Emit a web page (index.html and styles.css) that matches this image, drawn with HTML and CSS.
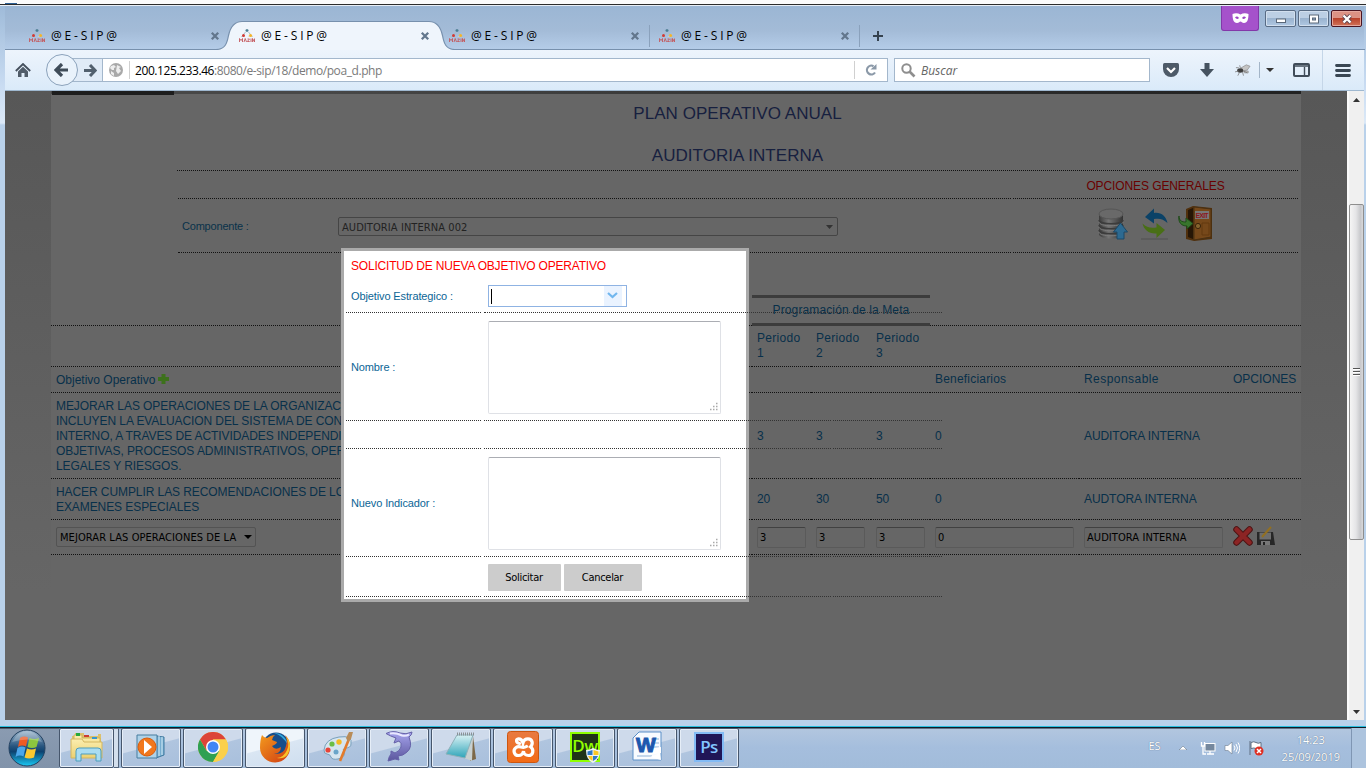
FILE: index.html
```html
<!DOCTYPE html>
<html lang="es">
<head>
<meta charset="utf-8">
<title>@ E - S I P @</title>
<link rel="stylesheet" href="styles.css">
</head>
<body>
<svg width="0" height="0" class="defs" aria-hidden="true">
  <defs>
    <linearGradient id="gold" x1="0" y1="0" x2="0" y2="1"><stop offset="0" stop-color="#fbeeb0"/><stop offset="1" stop-color="#ecd070"/></linearGradient>
    <linearGradient id="orb" x1="0" y1="0" x2="0" y2="1"><stop offset="0" stop-color="#9fb9cf"/><stop offset=".45" stop-color="#28557f"/><stop offset=".6" stop-color="#0d4270"/><stop offset="1" stop-color="#19c9f5"/></linearGradient>
    <linearGradient id="dolphinFill" x1="0" y1="0" x2="0" y2="1"><stop offset="0" stop-color="#a7a5ee"/><stop offset="1" stop-color="#5b569d"/></linearGradient>
    <linearGradient id="paper" x1="0" y1="0" x2="0" y2="1"><stop offset="0" stop-color="#d8f1f4"/><stop offset="1" stop-color="#2ea4b8"/></linearGradient>
    <linearGradient id="orange" x1="0" y1="0" x2="0" y2="1"><stop offset="0" stop-color="#e87a42"/><stop offset="1" stop-color="#f36b16"/></linearGradient>
    <linearGradient id="fox" x1="0" y1="0" x2="1" y2="1"><stop offset="0" stop-color="#f39a1e"/><stop offset="1" stop-color="#cf3a12"/></linearGradient>
    <linearGradient id="disk" x1="0" y1="0" x2="1" y2="0"><stop offset="0" stop-color="#3c3c3c"/><stop offset=".4" stop-color="#747474"/><stop offset="1" stop-color="#333"/></linearGradient>
    <symbol id="mazin" viewBox="0 0 16 13">
      <path d="M8 0v3M6.500 1.500h3" stroke="#4d7f92" stroke-width="1.300"/>
      <path d="M6.500 3 2.500 8M9.500 3l4 5" stroke="#a8c0c6"/>
      <circle cx="4.500" cy="6.500" r="1.500" fill="#d33b35"/><circle cx="11.500" cy="6.500" r="1.600" fill="#f4b52a"/>
      <path d="M6 8h3l2-2-1 2H5z" fill="#f3d8b0"/>
      <path d="M.5 13v-3.500l1.500 2 1.500-2V13M5 13l1.200-3.500L7.500 13M8.500 10h2L8.300 12.500h2.400M12 9.500V13M13.500 13V9.500l2 3.500V9.500" stroke="#c4595d" stroke-width=".9" fill="none"/>
    </symbol>
    <symbol id="x" viewBox="0 0 10 10"><path d="m1.800 1.800 6.400 6.400m0-6.400L1.800 8.200" stroke="#63778d" stroke-width="2.300"/></symbol>
  </defs>
</svg>
<div class="screen">
  <div class="backdrop"><i></i></div>
  <div class="window">
    <div class="strip">
      <svg class="outline" width="1360" height="44" viewBox="5 6 1360 44">
        <path d="M5 50V49.500H216c9 0 11-6 12.500-14 2-9 6-14 13.500-14H429c7.500 0 11.500 5 13.500 14 1.500 8 3.500 14 12.500 14H1365V51H5z" fill="#eff5fc"/>
        <path d="M5 49.500H216c9 0 11-6 12.500-14 2-9 6-14 13.500-14H429c7.500 0 11.500 5 13.500 14 1.500 8 3.500 14 12.500 14H1365" fill="none" stroke="#7790ad" stroke-width="1.200"/>
      </svg>
      <div class="tab"><svg width="16" height="13"><use href="#mazin"/></svg><span>@ E - S I P @</span><svg width="10" height="10"><use href="#x"/></svg></div>
      <div class="tab"><svg width="16" height="13"><use href="#mazin"/></svg><span>@ E - S I P @</span><svg width="10" height="10"><use href="#x"/></svg></div>
      <div class="tab ruled"><svg width="16" height="13"><use href="#mazin"/></svg><span>@ E - S I P @</span><svg width="10" height="10"><use href="#x"/></svg></div>
      <div class="tab ruled"><svg width="16" height="13"><use href="#mazin"/></svg><span>@ E - S I P @</span><svg width="10" height="10"><use href="#x"/></svg></div>
      <svg class="plus" width="12" height="12"><path d="M6 1v10M1 6h10" stroke="#35424f" stroke-width="2"/></svg>
      <div class="captions">
        <div class="mask"><svg width="17" height="11" viewBox="0 0 17 11"><path d="M.5 1C3 0 6 0 8.500 1.500 11 0 14 0 16.500 1c0 5-1 9-4.500 9-2 0-2.500-1.500-3.500-1.500S7 10 5 10C1.500 10 .5 6 .5 1z" fill="#fff"/><path d="M3 4.500q2-2 4 .5-2 2-4-.5m7 .5q2-2.500 4-.5-2 2.500-4 .5" fill="#9a45c4"/></svg></div>
        <div class="cap"><svg width="12" height="8"><rect x="1.500" y="4" width="9" height="3.500" fill="#fff" stroke="#5a6879"/></svg></div>
        <div class="cap"><svg width="12" height="10"><rect x="1.500" y="1" width="9" height="8" fill="#fff" stroke="#5a6879"/><rect x="4.500" y="4" width="3" height="2" fill="#8fa5c0" stroke="#5a6879"/></svg></div>
        <div class="cap red"><svg width="12" height="10"><path d="m2.500 1.500 7 7m0-7-7 7" stroke="#5b4651" stroke-width="4"/><path d="m2.500 1.500 7 7m0-7-7 7" stroke="#fff" stroke-width="2.400"/></svg></div>
      </div>
    </div>
    <div class="toolbar">
      <svg class="home" width="16" height="15" viewBox="0 0 16 15"><path d="m.8 8 7.200-7 7.200 7" fill="none" stroke="#444f5c" stroke-width="1.800"/><path d="M3 8.500 8 3.800l5 4.700V14H9.500v-4h-3v4H3z" fill="#505c69"/></svg>
      <div class="back"><svg width="16" height="14" viewBox="0 0 16 14"><path d="M8 1 2 7l6 6M3 7h11" fill="none" stroke="#3f4c59" stroke-width="3.200"/></svg></div>
      <div class="fwd"><svg width="13" height="13" viewBox="0 0 13 13"><path d="m6 1 5.200 5.500L6 12M0 6.500h10" fill="none" stroke="#52606e" stroke-width="3"/></svg></div>
      <div class="address">
        <svg width="14" height="14" viewBox="0 0 14 14"><circle cx="7" cy="7" r="7" fill="#a9a9a9"/><path d="m2 3 3-1 2 2-2 1 0 2-2 0-2-2M8 2l4 2-2 1 2 3-3 3-2-3zM2 8l3 2 0 3-3-2z" fill="#fff" opacity=".8"/></svg>
        <i class="bar"></i><span class="url"><b>200.125.233.46</b>:8080/e-sip/18/demo/poa_d.php</span><i class="bar"></i>
        <svg class="reload" width="12" height="12" viewBox="0 0 12 12"><path d="M8.500 2.200A4.400 4.400 0 1 0 10 8.500" fill="none" stroke="#8b99a8" stroke-width="2.200"/><path d="M5.500 5.500h6V0z" fill="#8b99a8"/></svg>
      </div>
      <div class="search"><svg width="15" height="15" viewBox="0 0 15 15"><circle cx="5.500" cy="5.500" r="4.200" fill="none" stroke="#8e8e8e" stroke-width="2"/><path d="m8.500 8.500 5 5" stroke="#8e8e8e" stroke-width="2.600"/></svg><span>Buscar</span></div>
      <div class="tools">
        <svg width="16" height="14" viewBox="0 0 16 14"><path d="M1.500 0h13Q16 0 16 1.500V6a8 8 0 0 1-16 0V1.500Q0 0 1.500 0z" fill="#4d5a68"/><path d="m4 5 4 4 4-4" fill="none" stroke="#fff" stroke-width="2.200"/></svg>
        <svg width="14" height="14" viewBox="0 0 14 14"><path d="M4.500 0h5v6H14l-7 8-7-8h4.500z" fill="#465360"/></svg>
        <svg class="fly" width="16" height="13" viewBox="0 0 17 13"><path d="m6 4 6-3.500L16 2l-3 4-5 1zM9 7l5 0 0 2-4 0z" fill="#c4c4c4" stroke="#888" stroke-width=".7"/><ellipse cx="5.500" cy="6.500" rx="3.200" ry="2.400" fill="#3d3d3d"/><path d="M1 3.500h3M0 8l4-1M3 12l2-4M9 12 8 8M13 9l-4-2M5 1l1 4" stroke="#777" stroke-width=".8"/></svg>
        <i class="rule"></i>
        <svg class="drop" width="8" height="4"><path d="M0 0h8L4 4z" fill="#333"/></svg>
        <svg class="panel" width="17" height="14" viewBox="0 0 17 14"><rect x="1" y="1" width="15" height="12" rx="1" fill="none" stroke="#404c59" stroke-width="2"/><path d="M1 3h15M11.500 4v9" stroke="#404c59" stroke-width="1.400"/></svg>
        <i class="rule tall"></i>
        <svg width="16" height="13"><path d="M1.500 1.500h13m-13 5h13m-13 5h13" stroke="#394653" stroke-width="2.800" stroke-linecap="round"/></svg>
      </div>
    </div>
    <div class="view">
      <div class="page">
        <main class="sheet">
          <div class="ribbon"><i></i></div>
          <section class="head">
            <h1>PLAN OPERATIVO ANUAL</h1>
            <h1 class="second">AUDITORIA INTERNA</h1>
            <div class="hrow general"><div></div><div class="redtext">OPCIONES GENERALES</div></div>
            <div class="hrow comp">
              <div class="lab">Componente :</div>
              <div><div class="select wide"><span>AUDITORIA INTERNA 002</span><svg width="7" height="4"><path d="M0 0h7L3.500 4z" fill="#333"/></svg></div></div>
              <div class="icons">
                <svg width="30" height="32" viewBox="0 0 30 32"><path d="M1 6v20c0 6 24 6 24 0V6z" fill="url(#disk)"/><ellipse cx="13" cy="6" rx="12" ry="5" fill="#696969" stroke="#555"/><path d="M1 12c0 5 24 5 24 0M1 17c0 5 24 5 24 0M1 22c0 5 24 5 24 0" fill="none" stroke="#3c3c3c" stroke-width="1.500"/><path d="M1 14c0 5 24 5 24 0M1 19c0 5 24 5 24 0M1 24c0 5 24 5 24 0" fill="none" stroke="#7c7c7c"/><path d="m22.500 15 7 9H26v7h-7v-7h-3.500z" fill="#2d6a91" stroke="#1c4866"/></svg>
                <svg class="sync" width="28" height="32" viewBox="0 0 28 32"><path d="M4 9 13 .5V5c7-1 12 3 13.500 10-4-4-8-5-13.500-4v4.500z" fill="#0b4267"/><path d="M24 22l-8.500 8v-4.500C8 26 3 22 1.500 15.500c4 4 8 5 14 4V15z" fill="#496f16"/><path d="M0 31h27" stroke="#515151"/></svg>
                <svg class="exit" width="35" height="35" viewBox="0 0 35 35"><path d="M8 3 15 0l19 2v31l-18 2-8-2z" fill="#51300d"/><path d="m10 4 5-2v31l-5-2z" fill="#261606"/><path d="m16 1 17 2v28l-17 3z" fill="#76481a" stroke="#493013"/><path d="M17 5h14v8H17z" fill="#777"/><path d="M24 17h7v12h-7z" fill="none" stroke="#62390f"/><circle cx="20" cy="20" r="2.600" fill="#85642f" stroke="#3b240b"/><path d="M1 10c0 5 3 6 7 6v-4l7 5.500L9 23v-3C3 20 0 16 1 10z" fill="#38752c" stroke="#1f4b19"/><text x="17.500" y="12" font-size="7" font-weight="bold" fill="#8c1920" textLength="13" font-family="Liberation Sans">EXIT</text></svg>
              </div>
            </div>
          </section>
          <section class="plan">
            <div class="row r1"><div class="c"></div><div class="meta">Programación de la Meta</div><div class="c tail"></div></div>
            <div class="row r2"><div class="c"></div><div class="c">Periodo<br>1</div><div class="c">Periodo<br>2</div><div class="c">Periodo<br>3</div><div class="c"></div><div class="c"></div><div class="c"></div></div>
            <div class="row r3"><div class="c first-head"><span>Objetivo Operativo</span><svg class="add" width="13" height="12"><path d="M6.500 1v10M1 6h11" stroke="#3d711c" stroke-width="4"/></svg></div><div class="c"></div><div class="c"></div><div class="c"></div><div class="c low">Beneficiarios</div><div class="c low resp">Responsable</div><div class="c low">OPCIONES</div></div>
            <div class="row r4"><div class="c">MEJORAR LAS OPERACIONES DE LA ORGANIZACION,<br>INCLUYEN LA EVALUACION DEL SISTEMA DE CONTROL<br>INTERNO, A TRAVES DE ACTIVIDADES INDEPENDIENTES,<br>OBJETIVAS, PROCESOS ADMINISTRATIVOS, OPERATIVOS,<br>LEGALES Y RIESGOS.</div><div class="c">3</div><div class="c">3</div><div class="c">3</div><div class="c">0</div><div class="c">AUDITORA INTERNA</div><div class="c"></div></div>
            <div class="row r5"><div class="c">HACER CUMPLIR LAS RECOMENDACIONES DE LOS<br>EXAMENES ESPECIALES</div><div class="c">20</div><div class="c">30</div><div class="c">50</div><div class="c">0</div><div class="c">AUDTORA INTERNA</div><div class="c"></div></div>
            <div class="row r6"><div class="c"><div class="select"><span>MEJORAR LAS OPERACIONES DE LA</span><svg width="8" height="4"><path d="M0 0h8L4 4z" fill="#000"/></svg></div></div><div class="c"><div class="input">3</div></div><div class="c"><div class="input">3</div></div><div class="c"><div class="input">3</div></div><div class="c"><div class="input long">0</div></div><div class="c"><div class="input long">AUDITORA INTERNA</div></div>
              <div class="c acts"><svg width="20" height="20"><path d="m3.500 3.500 13 13m0-13-13 13" stroke="#4e1414" stroke-width="6.500" stroke-linecap="round"/><path d="m3.500 3.500 13 13m0-13-13 13" stroke="#8c2424" stroke-width="4.500" stroke-linecap="round"/></svg><svg width="19" height="20" viewBox="0 0 19 20"><path d="M1 6h16l2 13H1z" fill="#272727"/><path d="M3.500 6.500h11.500v7H3.500z" fill="#6e6e6e"/><path d="M5 15h9v4H5z" fill="#777"/><path d="M7 16h2v3H7z" fill="#222"/><path d="M6 11 15 1" stroke="#927022" stroke-width="2"/></svg></div></div>
          </section>
        </main>
        <div class="modal">
          <h2>SOLICITUD DE NUEVA OBJETIVO OPERATIVO</h2>
          <div class="form">
            <label>Objetivo Estrategico :</label><div class="field span m1"><div class="combo"><i class="caret"></i><span class="trigger"><svg width="11" height="7"><path d="m1 1 4.500 4L10 1" fill="none" stroke="#72b7ee" stroke-width="2.200"/></svg></span></div></div>
            <label>Nombre :</label><div class="field m2"><div class="area"><svg width="9" height="9"><path d="M7 1.500h1.500M7 4.500h1.500M7 7.500h1.500M4 4.500h1.500M4 7.500h1.500M1 7.500h1.500" stroke="#aaa" stroke-width="1.400"/></svg></div></div><div class="rest"></div>
            <label></label><div class="field m3"></div><div class="rest"></div>
            <label>Nuevo Indicador :</label><div class="field m2"><div class="area"><svg width="9" height="9"><path d="M7 1.500h1.500M7 4.500h1.500M7 7.500h1.500M4 4.500h1.500M4 7.500h1.500M1 7.500h1.500" stroke="#aaa" stroke-width="1.400"/></svg></div></div><div class="rest"></div>
            <label></label><div class="field m5"><button class="ok">Solicitar</button><button class="cancel">Cancelar</button></div><div class="rest"></div>
          </div>
        </div>
      </div>
      <div class="scroll">
        <svg width="7" height="4"><path d="M3.500 0 7 4H0z" fill="#333"/></svg>
        <div class="thumb"><i></i><i></i><i></i></div>
        <svg width="7" height="4"><path d="M0 0h7L3.500 4z" fill="#333"/></svg>
      </div>
    </div>
  </div>
  <div class="taskbar">
    <div class="start"><svg width="38" height="38" viewBox="0 0 38 38"><circle cx="19" cy="19" r="18" fill="url(#orb)" stroke="#23405f"/><path d="M12 9q4-2.500 8-.5l-2 9q-4-2-8 .5z" fill="#ee5a24"/><path d="M21.500 9q5 2 9.500 0l-2.500 9q-4.500 2-9 0z" fill="#8cc63f"/><path d="M9.500 19q4-2.500 8-.5l-2 9q-4-2-8 .5z" fill="#4ba6ea"/><path d="M19 19.500q4.500 2 9 0l-2 9q-5 2-9.500 0z" fill="#fdc82f"/><path d="M4 13Q10 2 19 2t15 11q-14-5-30 0z" fill="#fff" opacity=".22"/></svg></div>
    <div class="app first"><svg width="34" height="32" viewBox="0 0 34 32"><path d="M2 5h3V2h9v3h14V3h3v23H2z" fill="#dcc16d"/><path d="M4 4h8v3h18v19H4z" fill="url(#gold)" stroke="#cfb258"/><path d="M6 2h4v3H6z" fill="#26a83c"/><path d="M14 4h5v2h-5z" fill="#cc3c33"/><path d="M22 6h5v2h-5z" fill="#3497d2"/><path d="M1 8h11l2 3h18v16H1z" fill="url(#gold)" stroke="#d3b661"/><path d="M6 30V20q0-3 3-3h19q3 0 3 3v10h-5v-7H11v7z" fill="#a9dcf1" stroke="#4f9dbb"/></svg></div>
    <i class="stack"></i>
    <div class="app"><svg width="30" height="28" viewBox="0 0 30 28"><path d="m20 3 8 1v18l-8 3z" fill="#76add0" stroke="#3f799f"/><path d="M23 3v20M26 4v18" stroke="#d5edf9"/><path d="M1 2h20v23H1z" fill="#aed2e9" stroke="#477c9f"/><circle cx="11" cy="14" r="9" fill="#f1771d" stroke="#db5b0b"/><path d="m8 7 8 7-8 7z" fill="#fff"/></svg></div>
    <div class="app"><svg width="30" height="30" viewBox="-15 -15 30 30"><circle r="15" fill="#fcd04b"/><path d="M0-7.500H13A15 15 0 0 0-13-7.500L-6.500 3.750z" fill="#dc4439"/><path d="M-13-7.500A15 15 0 0 0 0 15L6.500 3.750-6.500 3.750z" fill="#2fa053"/><path d="m0 15 6.500-11.250L0-7.500H13A15 15 0 0 1 0 15z" fill="#fbd04b"/><circle r="7" fill="#fff"/><circle r="5.500" fill="#4286f5"/></svg></div>
    <div class="app active"><svg width="32" height="32" viewBox="0 0 32 32"><circle cx="17" cy="15" r="13.500" fill="#174e8b"/><path d="M15 2q11 0 14 12-6-10-14-12" fill="#34a9dc"/><path d="M3 4q2 3 5 3 4-3 8-3-3 2-3 5l5 2q0 2-5 4 3 5 9 1 0 6-7 7 10 1 12-8 2-6-1-11 5 4 5 12a15 15 0 0 1-30 1Q1 9 3 4z" fill="url(#fox)"/><path d="M27 6q4 7 1 13-3 7-10 8 12 2 13-12 0-6-4-9z" fill="#f8c32b"/></svg></div>
    <div class="app"><svg width="32" height="32" viewBox="0 0 32 32"><path d="M3 19Q4 8 18 6t12 7q0 4-6 4-3 1-1 4 2 5-6 7-6 1-7-2t-4-3-3-4z" fill="#d6e5ef" stroke="#78a0bc"/><circle cx="7" cy="19" r="2.600" fill="#e74438"/><circle cx="11" cy="13" r="2.600" fill="#6bbe45"/><circle cx="18" cy="11" r="2.700" fill="#f6ba23"/><circle cx="15" cy="21" r="2.500" fill="#6aa5c9"/><path d="m28 8-9 22" stroke="#e27b2c" stroke-width="2.600"/><path d="m25 7 3-6 4 0-2 7-3 3z" fill="#b98c58"/></svg></div>
    <div class="app"><svg width="30" height="32" viewBox="0 0 30 32"><path d="M2 2.500Q9-1 16 2q6 2 12-1 0 3-3 5 4 10-2 15-4 4-9 4l1 4-4-1-7 2q1-5 3-7l0-3 4 2q5-2 6-6 1-4-2-6l-5 2q1-3 2-5Q6 5 2 2.500z" fill="url(#dolphinFill)" stroke="#6561a8"/><path d="M6 2.500q6-1 12 2 4 1 7-1" fill="none" stroke="#e9e8ff" stroke-width="2"/></svg></div>
    <div class="app"><svg width="32" height="32" viewBox="0 0 32 32"><path d="m28 5 3 23-6 2z" fill="#7c6848"/><path d="m28 4-1 26-8-3z" fill="#c8d0d0"/><path d="M12 4h16l-8 23L1 23z" fill="url(#paper)" stroke="#8db1b9"/><path d="M12 3h17" stroke="#899195" stroke-width="3" stroke-dasharray="1 1"/></svg></div>
    <div class="app"><svg width="32" height="32" viewBox="0 0 32 32"><rect x=".5" y=".5" width="31" height="31" rx="3" fill="url(#orange)" stroke="#cd5610"/><path d="M12.500 12.500C9 12 8.500 8 11.500 7.800c3 0 4 2.200 4.500 4 .5-2 2-4 5-4 4.500 0 5.500 5.200 2.500 8 4 3 2.500 8.700-2 8.700-3 0-5-2-5-4.500-.5 2.500-2 4.500-5 4.500-4.500 0-6-5.500-2.500-8q2-1.500 5-.5 3 1 5.500-.5" fill="none" stroke="#fff" stroke-width="3.200" stroke-linecap="round"/></svg></div>
    <div class="app"><div class="tile dw">Dw<svg width="14" height="15" viewBox="0 0 14 15"><path d="M7 0q3 2 7 2 0 10-7 13Q0 12 0 2q4 0 7-2z" fill="#eef3f8"/><path d="M6.500 2v5H1.500V3.500zM12 8q-1 3-5 5V8z" fill="#2e79c6"/><path d="M7.500 2v5h5V3.500zM2 8q1 3 4.500 5V8z" fill="#f9c824"/></svg></div></div>
    <div class="app"><svg width="30" height="32" viewBox="0 0 30 32"><path d="M7 1h22v28H1V7z" fill="#f8fbff" stroke="#5a8fc8"/><path d="M19 8h8m-8 4h8m-8 4h8M5 25h15" stroke="#8fb2d7"/><path d="m17 18 12-2v6l-12 2zM18 26l10-4 1 7z" fill="#fff"/><text x="4" y="21" font-family="Liberation Sans" font-weight="bold" font-size="21" fill="#1d58ae" stroke="#1d58ae">W</text></svg></div>
    <div class="app"><div class="tile ps">Ps</div></div>
    <div class="tray">
      <span class="lang">ES</span>
      <svg class="up" width="8" height="4"><path d="M4 0 8 4H0z" fill="#fff" stroke="#5b6b7d" stroke-width=".5"/></svg>
      <svg class="net" width="16" height="16" viewBox="0 0 16 16"><rect x="5" y="3.500" width="10" height="7.500" fill="#75889e" stroke="#fff"/><path d="M10 11v2.500M7 14h7M1.500 2v4h3V2M3 6v8h3" fill="none" stroke="#fff" stroke-width="1.300"/></svg>
      <svg class="vol" width="16" height="16" viewBox="0 0 16 16"><path d="M1 5.500h3L8 2v12L4 10.500H1z" fill="#fff" stroke="#6d7c8f" stroke-width=".6"/><path d="M10 5.500q2 2.500 0 5M12 4q3 4 0 8M14 2.500q3.500 5.500 0 11" fill="none" stroke="#fff"/></svg>
      <svg class="flag" width="16" height="16" viewBox="0 0 16 16"><path d="M2 1v14M3 2.500q3-1.500 5 0t5 0v6q-3 1-5 0t-5 0z" fill="#fff" stroke="#5f6f82"/><circle cx="11" cy="11" r="4.500" fill="#df3024"/><path d="m9 9 4 4m0-4-4 4" stroke="#fff" stroke-width="1.500"/></svg>
      <span class="clock">14:23<br>25/09/2019</span>
      <i class="desk"></i>
    </div>
  </div>
</div>
</body>
</html>
```
FILE: styles.css
```css
* { box-sizing: border-box; }
body { margin: 0; overflow: hidden; background: #fff; font-family: "Liberation Sans", Arial, sans-serif; }
svg { flex: none; display: block; }
.defs { position: absolute; }
.screen { width: 1366px; height: 768px; display: flex; flex-direction: column; }
.backdrop { height: 6px; border-bottom: 1px solid #e8eef5; background: linear-gradient(#fafafa 4px, #2b2b2b 4px); }
.backdrop i { display: block; width: 12px; height: 2px; margin-left: 5px; border-top: 1px solid #2d5f93; position: relative; top: 3px; }

/* browser window */
.window { height: 720px; padding: 0 2px 6px 5px; display: flex; flex-direction: column; background: linear-gradient(#9fbbd9, #c9dcf2 80px, #dce9f7 117px, #b9d1ea 119px, #b9d1ea); }
.strip { height: 44px; display: flex; position: relative; padding-left: 15px; background: linear-gradient(#9bb6d4, #a3bbd7 55%, #b5cde9); }
.outline { position: absolute; left: 0; top: 0; }
.tab { position: relative; width: 210px; height: 44px; padding: 16px 10px 1px 9px; display: flex; align-items: center; font: 12px "Open Sans", sans-serif; }
.tab span { flex: 1; margin-left: 6px; color: #000; letter-spacing: -.15px; }
.ruled::after { content: ""; position: absolute; right: 0; top: 19px; width: 1px; height: 22px; background: #8aa1bc; }
.plus { position: relative; margin: 24px 0 0 12px; }
.captions { position: relative; margin-left: auto; display: flex; padding-right: 2px; }
.mask { width: 38px; height: 25px; margin-right: 6px; background: #a552cb; border: 1px solid #8338a9; border-top: 0; border-radius: 0 0 3px 3px; display: flex; align-items: center; justify-content: center; padding-top: 1px; }
.cap { width: 31px; height: 17px; margin: 4px 2px 0 0; border: 1px solid #586b84; border-radius: 2px; box-shadow: inset 0 0 0 1px #d2dfee; background: linear-gradient(#bccfe4 50%, #9ab3cf 50%, #b0c8e2); display: flex; align-items: center; justify-content: center; }
.red { margin-right: 0; border-color: #4a1420; box-shadow: inset 0 0 0 1px #e5a99f; background: linear-gradient(#dc9284 48%, #b9422b 50%, #d1735a); }
.toolbar { height: 41px; display: flex; align-items: center; border-bottom: 1px solid #9fb8d0; background: linear-gradient(#edf4fc, #daeaf9); padding-left: 10px; }
.home { margin-right: 15px; }
.back { width: 32px; height: 32px; border: 1px solid #8ba2bb; border-radius: 50%; background: #e9f2fb; display: flex; align-items: center; justify-content: center; z-index: 1; }
.fwd { width: 30px; height: 24px; margin-left: -6px; border: 1px solid #a3b7cc; border-right: 0; background: #e0ebf7; display: flex; align-items: center; padding-left: 11px; }
.address { width: 786px; height: 24px; border: 1px solid #a3b7cc; background: #fff; display: flex; align-items: center; padding-left: 6px; margin-right: 6px; }
.bar { width: 1px; height: 18px; background: #d0d0d0; margin-left: 6px; }
.url { flex: 1; margin-left: 5px; font: 12px "Open Sans", sans-serif; color: #7a7a7a; white-space: nowrap; letter-spacing: -.42px; }
.url b { font-weight: 400; color: #000; }
.reload { margin: 0 10px; }
.search { width: 256px; height: 24px; border: 1px solid #a3b7cc; background: #fff; display: flex; align-items: center; padding-left: 6px; font: italic 12px "Open Sans", sans-serif; color: #666; }
.search span { margin-left: 5px; }
.tools { flex: 1; display: flex; align-items: center; padding-left: 13px; }
.tools svg + svg { margin-left: 21px; }
.rule { width: 1px; height: 16px; background: #a3b5c8; margin-left: 8px; }
.drop { margin-left: 6px; }
.tools .panel { margin-left: 19px; }
.tools .tall { height: 40px; background: #c5d6e8; margin: 0 12px 0 12px; }
.view { flex: 1; display: flex; }
.page { width: 1342px; position: relative; padding-left: 46px; overflow: hidden; background: linear-gradient(#575757, #666 500px); }
.sheet { width: 1250px; height: 500px; background: #666; }

/* page heading */
.ribbon { height: 3px; background: linear-gradient(90deg, #484848, #484848 20%, #222 95%); }
.ribbon i { display: block; width: 122px; height: 4px; margin-left: 1px; background: #1d1d1d; }
.head { margin-left: 126px; width: 1121px; }
h1 { margin: 0; height: 38px; line-height: 40px; text-align: center; font-size: 17px; font-weight: 400; color: #17203f; letter-spacing: .04px; }
.second { height: 39px; line-height: 48px; border-bottom: 1px dotted #111; }
.hrow { display: grid; gap: 2px; margin-left: 1px; font-size: 12px; }
.hrow > div { border-bottom: 1px dotted #111; display: flex; align-items: center; }
.general { grid-template-columns: 833px 285px; height: 28px; }
.comp { grid-template-columns: 154px 677px 285px; height: 54px; }
.hrow .redtext { justify-content: center; color: #6a0000; padding-top: 2px; letter-spacing: -.1px; }
.comp .lab { padding-left: 4px; font-size: 11px; color: #09324a; letter-spacing: -.2px; }
.select { width: 200px; height: 20px; border: 1px solid #535353; border-radius: 2px; display: flex; align-items: center; justify-content: space-between; padding: 0 3px; font: 11px "DejaVu Sans Condensed", sans-serif; letter-spacing: .08px; white-space: nowrap; color: #000; }
.wide { width: 500px; height: 19px; margin: 2px 0 0 4px; border-color: #454545; color: #222; padding: 1px 4px 0 3px; }
.hrow .icons { padding: 0 0 4px 85px; }
.sync { margin-left: 13px; }
.exit { margin-left: 9px; }

/* plan table */
.row { display: grid; grid-template-columns: 701px 59px 60px 59px 149px 149px 73px; font-size: 12px; line-height: 15px; color: #08304a; }
.c { border-bottom: 1px dotted #111; padding-left: 5px; display: flex; align-items: center; white-space: nowrap; letter-spacing: .15px; }
.r1 { grid-template-columns: 701px 178px 371px; height: 73px; }
.meta { height: 31px; margin-top: 42px; border-top: 3px solid #3c3c3c; border-bottom: 3px solid #3c3c3c; display: flex; align-items: center; justify-content: center; letter-spacing: .12px; }
.r2 { height: 41px; }
.r2 .c { letter-spacing: .3px; }
.r3 { height: 26px; }
.first-head { letter-spacing: 0; padding-top: 2px; }
.low { letter-spacing: .2px; }
.resp { letter-spacing: .45px; }
.r3 .c:last-child { letter-spacing: 0; }
.add { margin: -4px 0 0 2px; }
.r4 { height: 86px; }
.r4 .c, .r5 .c { letter-spacing: -.08px; padding-top: 2px; }
.r5 { height: 41px; }
.r5 .c { padding-top: 1px; }
.r6 { height: 35px; }
.input { width: 49px; height: 21px; border: 1px solid #5a5a5a; border-top-color: #414141; border-radius: 2px; padding-left: 2px; font: 11px/20px "DejaVu Sans Condensed", sans-serif; letter-spacing: .08px; color: #000; }
.long { width: 139px; }
.acts svg + svg { margin-left: 3px; }
.acts svg { margin-top: -2px; }

/* dialog */
.modal { position: absolute; left: 336px; top: 157px; width: 408px; height: 354px; border: 3px solid #aaa; background: #fff; }
.modal h2 { margin: 0; height: 28px; padding-left: 7px; font-size: 12px; line-height: 30px; font-weight: 400; color: #f00; white-space: nowrap; letter-spacing: -.2px; }
.form { width: 596px; margin-left: 2px; display: grid; grid-template-columns: 135px 347px 109px; grid-template-rows: 34px 108px 28px 108px 40px; column-gap: 2.500px; font-size: 11px; color: #0b6596; }
.form > * { border-bottom: 1px dotted #333; display: flex; align-items: center; }
.form label { padding-left: 5px; letter-spacing: -.12px; }
.span { grid-column: span 2; }
.field { padding-left: 4px; }
.m2, .m5 { padding-top: 2px; }
.combo { width: 139px; height: 22px; border: 1px solid #8fb3e3; display: flex; justify-content: space-between; padding-right: 4px; }
.caret { width: 1px; height: 15px; margin: 3px 0 0 2px; background: #000; }
.trigger { width: 18px; background: #eaf3ff; display: flex; align-items: center; justify-content: center; }
.area { width: 233px; height: 93px; border: 1px solid #dfe1e6; border-top-color: #abadb3; border-radius: 2px; display: flex; align-items: flex-end; justify-content: flex-end; padding: 2px; }
.m5 { gap: 3px; }
.m5 button { height: 27px; border: 0; padding: 0; background: #ccc; border-radius: 1px; font: 11px "DejaVu Sans Condensed", sans-serif; letter-spacing: -.3px; color: #000; }
.ok { width: 73px; }
.cancel { width: 78px; }

/* scrollbar */
.scroll { width: 17px; border-left: 2px solid #fafafa; background: #f0f0f0; display: flex; flex-direction: column; align-items: center; padding: 7px 0 6px; }
.thumb { width: 15px; height: 336px; margin: 102px 0 auto; border: 1px solid #8e8e8e; border-radius: 2px; background: linear-gradient(90deg, #f5f5f5, #e5e5e7 45%, #c8c9cc 80%, #d8d8da); display: flex; flex-direction: column; gap: 1px; align-items: center; justify-content: center; }
.thumb i { width: 7px; height: 2px; border-top: 1px solid #555; background: #fff; }

/* taskbar */
.taskbar { height: 42px; border-top: 1px solid #28bede; display: flex; background: linear-gradient(#101c28 1px, #b2c6df 2px, #a5bedd 50%, #a2bcda); }
.start { width: 59px; background: linear-gradient(#101c28 1px, #8a9bb1 2px, #8193aa); padding: 2px 0 0 8px; }
.app { width: 60px; height: 40px; margin: 1px 2px 0 0; border: 1px solid #46566c; border-radius: 2px; box-shadow: inset 0 0 0 1px #e6eef8; background: linear-gradient(165deg, #cedaeb 45%, #b0c5df 47%, #a8bfdc); display: flex; align-items: center; justify-content: center; padding-bottom: 2px; }
.first { width: 55px; margin-right: 0; }
.active { background: linear-gradient(165deg, #eff5fb 45%, #dae6f3 47%, #cedeef); }
.stack { width: 5px; margin: 1px 2px 0 0; border: solid #52637a; border-width: 1px 1px 1px 0; background: #d3dfed; }
.tile { width: 30px; height: 30px; border: 2px solid #8fff00; background: #203318; font: 600 17px/24px "Open Sans", sans-serif; color: #8fff00; text-align: center; position: relative; letter-spacing: -.5px; }
.tile svg { position: absolute; right: -2px; bottom: -3px; }
.ps { border-color: #83bbf5; background: #201657; color: #83c5ff; line-height: 25px; }
.tray { flex: 1; display: flex; justify-content: flex-end; align-items: center; color: #fff; font: 11px/17px "Open Sans", sans-serif; text-shadow: 0 0 1px #3f546d; }
.lang { margin: 0 18px 4px 0; }
.up { margin-right: 13px; }
.net, .vol { margin-right: 8px; }
.flag { margin-right: 18px; }
.clock { text-align: center; margin-right: 11px; }
.desk { align-self: stretch; width: 15px; margin-top: 1px; border-left: 1px solid #7f96b3; background: #adc4de; }
```
